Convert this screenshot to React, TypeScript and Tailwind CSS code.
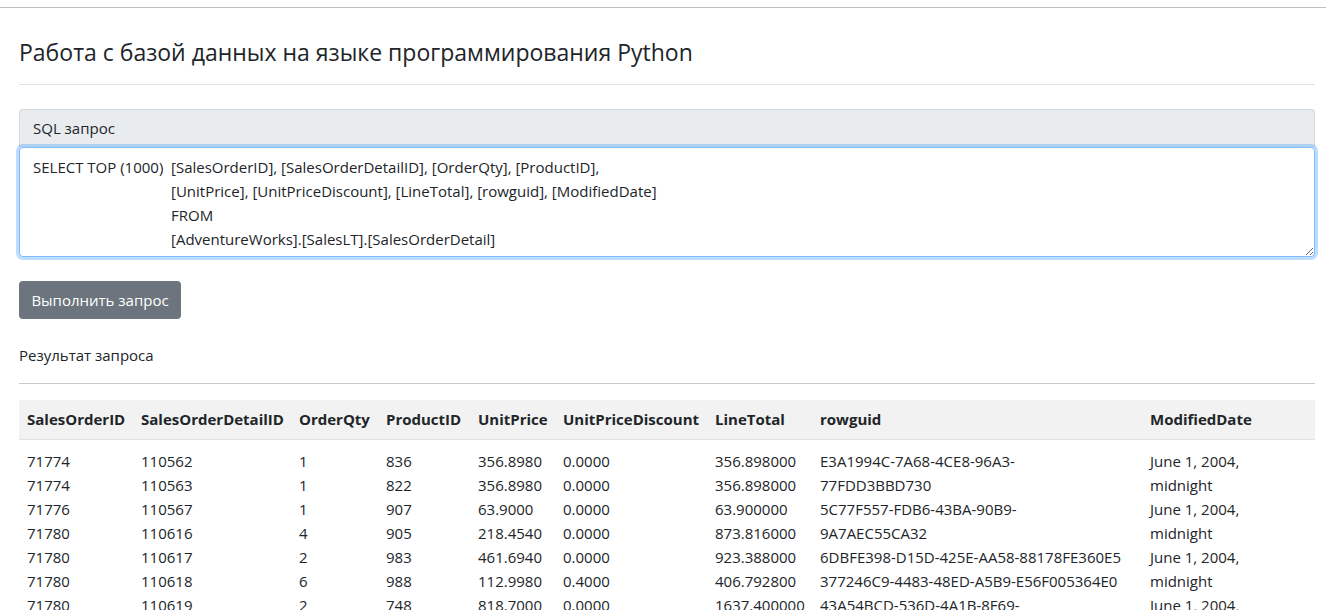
import React from 'react'

const font = { fontFamily: '"Open Sans", "Noto Sans", sans-serif' }

const columns = [
  'SalesOrderID',
  'SalesOrderDetailID',
  'OrderQty',
  'ProductID',
  'UnitPrice',
  'UnitPriceDiscount',
  'LineTotal',
  'rowguid',
  'ModifiedDate',
]

// rowguid and ModifiedDate wrap onto the next line in the original page
const rows = [
  ['71774', '110562', '1', '836', '356.8980', '0.0000', '356.898000', 'E3A1994C-7A68-4CE8-96A3-', 'June 1, 2004,'],
  ['71774', '110563', '1', '822', '356.8980', '0.0000', '356.898000', '77FDD3BBD730', 'midnight'],
  ['71776', '110567', '1', '907', '63.9000', '0.0000', '63.900000', '5C77F557-FDB6-43BA-90B9-', 'June 1, 2004,'],
  ['71780', '110616', '4', '905', '218.4540', '0.0000', '873.816000', '9A7AEC55CA32', 'midnight'],
  ['71780', '110617', '2', '983', '461.6940', '0.0000', '923.388000', '6DBFE398-D15D-425E-AA58-88178FE360E5', 'June 1, 2004,'],
  ['71780', '110618', '6', '988', '112.9980', '0.4000', '406.792800', '377246C9-4483-48ED-A5B9-E56F005364E0', 'midnight'],
  ['71780', '110619', '2', '748', '818.7000', '0.0000', '1637.400000', '43A54BCD-536D-4A1B-8F69-', 'June 1, 2004,'],
]

const gridCols = 'grid grid-cols-[114px_158px_87px_92px_85px_152px_105px_330px_1fr]'

export default function App() {
  return (
    <div className="min-h-screen bg-white text-[#212529]" style={font}>
      <div className="border-t border-[#bcc0c4] mt-[7px]" />

      <div className="pl-[19px] pr-[11px]">
        <h3 className="text-[23px] leading-[30px] pt-[29px] pb-[17px] font-normal">
          Работа с базой данных на языке программирования Python
        </h3>
        <div className="border-t border-[#dfe2e5]" />

        {/* SQL card */}
        <div className="mt-[24px]">
          <div className="h-[38px] flex items-center px-[13px] bg-[#e9ecef] border border-[#d4d8dc] border-b-0 rounded-t-[4px] text-[15px]">
            SQL запрос
          </div>
          <div className="relative h-[110px] border border-[#80bdff] rounded-[4px] shadow-[0_0_0_3px_rgba(0,123,255,0.25)] pt-[7px] px-[13px] text-[15px] leading-[24px] resize-y overflow-auto bg-white">
            <div className="flex">
              <div className="w-[138px] shrink-0">SELECT TOP (1000)</div>
              <div>
                <div>[SalesOrderID], [SalesOrderDetailID], [OrderQty], [ProductID],</div>
                <div>[UnitPrice], [UnitPriceDiscount], [LineTotal], [rowguid], [ModifiedDate]</div>
                <div>FROM</div>
                <div>[AdventureWorks].[SalesLT].[SalesOrderDetail]</div>
              </div>
            </div>
          </div>
        </div>

        <button className="mt-[24px] h-[38px] w-[162px] rounded-[4px] bg-[#6c757d] text-white text-[15px]">
          Выполнить запрос
        </button>

        <p className="mt-[24px] text-[15px] leading-[24px]">Результат запроса</p>
        <div className="mt-[16px] border-t border-[#c8c8c8]" />

        {/* result table */}
        <div className="mt-[16px]">
          <div className={`${gridCols} h-[40px] items-center bg-[#f2f2f2] border-b border-[#dee2e6] font-bold text-[15px]`}>
            {columns.map((c) => (
              <div key={c} className="pl-[8px] whitespace-nowrap">{c}</div>
            ))}
          </div>
          <div className="pt-[9px] text-[15px] leading-[24px]">
            {rows.map((r, i) => (
              <div key={i} className={gridCols}>
                {r.map((v, j) => (
                  <div key={j} className="pl-[8px] whitespace-nowrap">{v}</div>
                ))}
              </div>
            ))}
          </div>
        </div>
      </div>
    </div>
  )
}
